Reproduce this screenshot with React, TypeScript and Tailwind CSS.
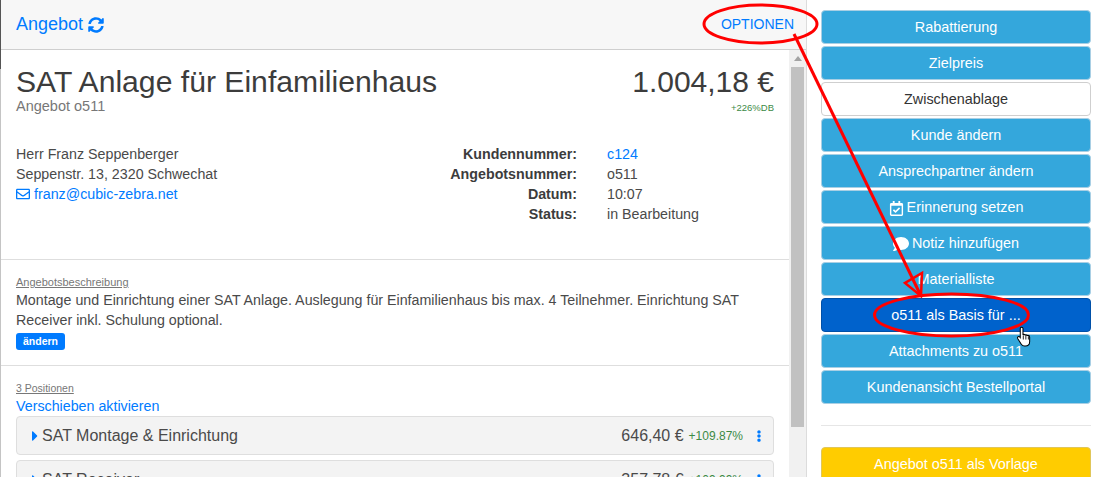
import type { ReactNode } from "react";
import { FaSyncAlt, FaRegEnvelope, FaRegCalendarCheck, FaComment, FaCaretRight, FaEllipsisV } from "react-icons/fa";

const blue = "border-[#a9cfe4] bg-[#34a7dc] text-white";

function SideButton({ children, className = blue }: { children: ReactNode; className?: string }) {
    return (
        <button className={`${className} flex h-[34px] w-full shrink-0 items-center justify-center gap-[3px] rounded-[4px] border pt-[2px] text-[14.4px]`}>
            {children}
        </button>
    );
}

function Position({ name, price, db }: { name: string; price: string; db: string }) {
    return (
        <div className="flex h-[39px] shrink-0 items-center rounded-[4px] border border-[#dedede] bg-[#f3f3f3] pl-[10px] pr-[8px] text-[#4a4a4a]">
            <FaCaretRight className="mr-[-1px] size-[16px] text-[#007bff]" />
            <span className="text-[16px]">{name}</span>
            <span className="ml-auto text-[16px]">{price}</span>
            <span className="ml-[5px] text-[12px] text-[#3c8a46]">{db}</span>
            <FaEllipsisV className="ml-[10px] size-[12px] text-[#007bff]" />
        </div>
    );
}

export default function App() {
    return (
        <div className="relative flex h-[477px] w-[1107px] overflow-hidden bg-white font-['Liberation_Sans',sans-serif] text-[14.25px] text-[#4a4a4a]">
            <main className="flex h-full w-[807px] shrink-0 flex-col border-x border-l-[#c4c4c4] border-r-[#dcdcdc]">
                <header className="flex h-[50px] shrink-0 items-center justify-between border-b border-[#cfcfcf] bg-[#f7f7f7] pl-[15px] pr-[12px] text-[#007bff]">
                    <div className="flex items-center gap-[5px] text-[18px]">
                        Angebot <FaSyncAlt className="size-[16px]" />
                    </div>
                    <span className="text-[14px]">OPTIONEN</span>
                </header>
                <div className="flex min-h-0 flex-1">
                    <div className="min-w-0 flex-1">
                        <section className="h-[210px] border-b border-[#dedede] pl-[15px] pr-[15px] pt-[15px]">
                            <div className="flex items-start justify-between">
                                <div>
                                    <h1 className="text-[30.15px] leading-[34px] text-[#3c3c3c]">SAT Anlage für Einfamilienhaus</h1>
                                    <p className="mt-[-1px] text-[14.5px] leading-[16px] text-[#777]">Angebot o511</p>
                                </div>
                                <div className="text-right">
                                    <div className="text-[30px] leading-[34px] text-[#3c3c3c]">1.004,18 €</div>
                                    <div className="mt-[3px] text-[9.5px] leading-[12px] text-[#3c8a46]">+226%DB</div>
                                </div>
                            </div>
                            <div className="mt-[30px] flex">
                                <div className="w-[395px] leading-[20px]">
                                    <p>Herr Franz Seppenberger</p>
                                    <p>Seppenstr. 13, 2320 Schwechat</p>
                                    <p className="flex items-center gap-[4px] text-[#007bff]">
                                        <FaRegEnvelope className="size-[14px]" />
                                        franz@cubic-zebra.net
                                    </p>
                                </div>
                                <dl className="grid grid-cols-[166px_auto] gap-x-[30px] leading-[20px]">
                                    <dt className="text-right font-bold text-[#3c3c3c]">Kundennummer:</dt>
                                    <dd className="text-[#007bff]">c124</dd>
                                    <dt className="text-right font-bold text-[#3c3c3c]">Angebotsnummer:</dt>
                                    <dd>o511</dd>
                                    <dt className="text-right font-bold text-[#3c3c3c]">Datum:</dt>
                                    <dd>10:07</dd>
                                    <dt className="text-right font-bold text-[#3c3c3c]">Status:</dt>
                                    <dd>in Bearbeitung</dd>
                                </dl>
                            </div>
                        </section>
                        <section className="h-[106px] border-b border-[#dedede] px-[15px] pt-[15px]">
                            <p className="mb-[1px] text-[11px] leading-[14px] text-[#777] underline">Angebotsbeschreibung</p>
                            <p className="leading-[20px]">
                                Montage und Einrichtung einer SAT Anlage. Auslegung für Einfamilienhaus bis max. 4 Teilnehmer. Einrichtung SAT Receiver inkl. Schulung optional.
                            </p>
                            <span className="mt-[2px] inline-block rounded-[3px] bg-[#007bff] px-[7px] text-[10.5px] font-bold leading-[17px] text-white">ändern</span>
                        </section>
                        <section className="flex flex-col px-[15px] pt-[15px]">
                            <p className="text-[10.5px] leading-[14px] text-[#777] underline">3 Positionen</p>
                            <a className="mt-[1px] leading-[20px] text-[#007bff]">Verschieben aktivieren</a>
                            <div className="flex flex-col gap-[5px]">
                                <Position name="SAT Montage & Einrichtung" price="646,40 €" db="+109.87%" />
                                <Position name="SAT Receiver" price="357,78 €" db="+109.99%" />
                            </div>
                        </section>
                    </div>
                    <div className="flex w-[17px] shrink-0 flex-col items-center bg-[#f1f1f1]">
                        <div className="mt-[6px] h-0 w-0 border-x-[4px] border-b-[5px] border-x-transparent border-b-[#a3a3a3]" />
                        <div className="mt-[6px] h-[360px] w-[13px] bg-[#c1c1c1]" />
                    </div>
                </div>
            </main>
            <aside className="flex w-[300px] flex-col gap-[2px] pl-[14px] pr-[16px] pt-[10px]">
                <SideButton>Rabattierung</SideButton>
                <SideButton>Zielpreis</SideButton>
                <SideButton className="border-[#cfcfcf] bg-white text-[#333]">Zwischenablage</SideButton>
                <SideButton>Kunde ändern</SideButton>
                <SideButton>Ansprechpartner ändern</SideButton>
                <SideButton><FaRegCalendarCheck className="size-[15px]" /> Erinnerung setzen</SideButton>
                <SideButton><FaComment className="size-[16px]" /> Notiz hinzufügen</SideButton>
                <SideButton>Materialliste</SideButton>
                <SideButton className="border-[#0050a8] bg-[#0062cc] text-white">o511 als Basis für ...</SideButton>
                <SideButton>Attachments zu o511</SideButton>
                <SideButton>Kundenansicht Bestellportal</SideButton>
                <hr className="mb-[19px] mt-[19px] border-[#e6e6e6]" />
                <SideButton className="border-[#e0c65a] bg-[#ffcc00] text-white">Angebot o511 als Vorlage</SideButton>
            </aside>

            {/* dark window edge beside the header */}
            <div className="absolute left-0 top-0 h-[69px] w-[1px] bg-[#555]" />

            {/* red annotations drawn on top of the screenshot */}
            <svg className="pointer-events-none absolute left-0 top-0" width="1107" height="477" fill="none" stroke="#ff0000" strokeWidth="3">
                <ellipse cx="760.5" cy="24" rx="56.5" ry="19" />
                <ellipse cx="951.5" cy="315" rx="77" ry="21" />
                <path d="M794 34 L921 296" />
                <path d="M921 296 L905 283 L922 273 Z" strokeWidth="2.5" />
            </svg>
            {/* hand cursor */}
            <svg className="pointer-events-none absolute left-[1016px] top-[326px]" width="18" height="22" viewBox="0 0 20 26">
                <path d="M6 1.5c1 0 1.6.7 1.6 1.6V10l1-.2c.6 0 1 .3 1.2.7l1.2-.1c.6 0 1 .3 1.2.7l1.1-.1c1.3 0 2.2.9 2.2 2.2v5.5c0 3-2 5-5 5H9.5c-1.8 0-3-.8-3.9-2.2L1.5 15c-.6-1-.4-1.9.3-2.3.8-.5 1.6-.2 2.2.5l.4.5V3.1C4.4 2.2 5 1.5 6 1.5Z" fill="#fff" stroke="#000" strokeWidth="1.2" />
                <path d="M8 11v5M11 11v5M14 12v4" stroke="#000" strokeWidth="1" />
            </svg>
        </div>
    );
}
